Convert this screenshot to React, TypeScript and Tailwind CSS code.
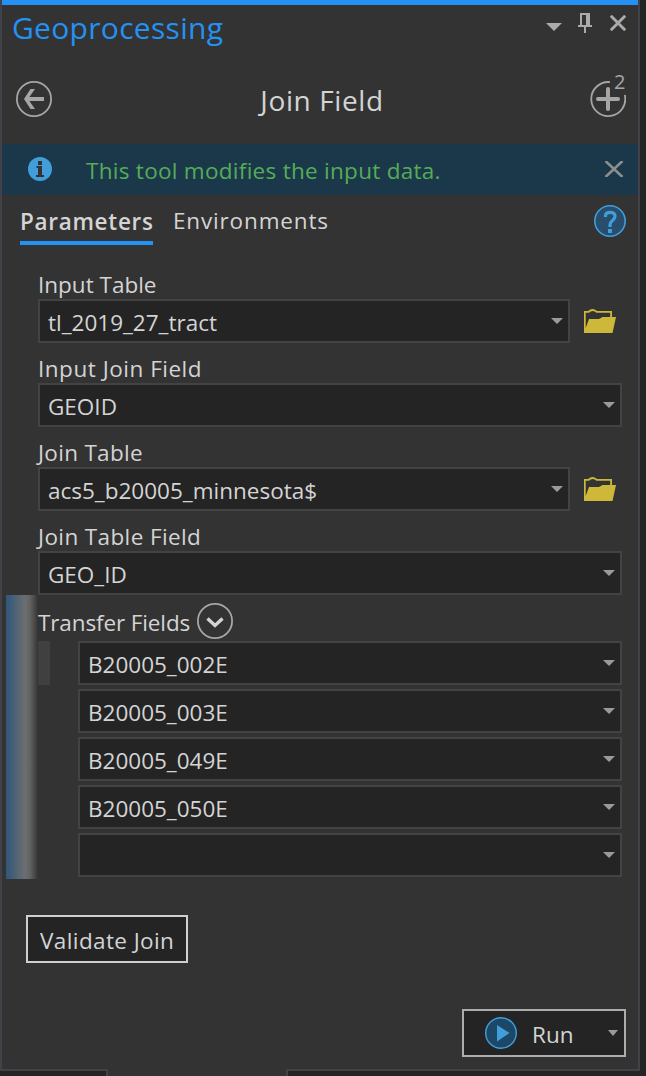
import React from 'react';

function Text({ children, className }: { children: React.ReactNode; className: string }) {
  return <span className={`block whitespace-nowrap ${className}`}>{children}</span>;
}

function Caret({ className = '' }: { className?: string }) {
  return (
    <svg width="12" height="6" viewBox="0 0 12 6" className={className}>
      <path d="M0 0H12L6 6Z" fill="#9b9b9b" />
    </svg>
  );
}

function Folder() {
  return (
    <svg width="32" height="25" viewBox="0 0 32 25" className="mb-px shrink-0">
      <path d="M0 25V3H4Q8.500 -1 13 3H28V9H26.200V4.800H12.500Q8.500 1.200 5 4.800H1.700V20L5 11H15L18.500 9H32L28.500 25Z" fill="#cdb83a" />
    </svg>
  );
}

function Select({ value, className, text = '' }: { value: string; className: string; text?: string }) {
  return (
    <div className={`flex h-11 items-center justify-between border-2 border-[#434343] bg-[#242424] pr-[5px] pl-2 ${className}`}>
      <Text className={`pt-1 text-[22.5px] ${text}`}>{value}</Text>
      <Caret />
    </div>
  );
}

interface Param {
  label: string;
  labelText: string;
  value: string;
  browse: boolean;
}

const params: Param[] = [
  { label: 'Input Table', labelText: 'tracking-[0px]', value: 'tl_2019_27_tract', browse: true },
  { label: 'Input Join Field', labelText: 'tracking-[0.52px]', value: 'GEOID', browse: false },
  { label: 'Join Table', labelText: 'tracking-[0.3px]', value: 'acs5_b20005_minnesota$', browse: true },
  { label: 'Join Table Field', labelText: 'tracking-[0.38px]', value: 'GEO_ID', browse: false },
];

const fields = ['B20005_002E', 'B20005_003E', 'B20005_049E', 'B20005_050E', ''];

export default function App() {
  return (
    <div className="flex h-[1076px] w-[646px] flex-col overflow-hidden bg-[#242424] font-['Open_Sans','Noto_Sans',sans-serif] text-[22.5px] leading-[30px] text-[#d4d4d4]">
      <main className="flex h-[1070px] w-[640px] flex-col border-x-2 border-[#414147] bg-[#333333]">
        <div className="h-[5px] shrink-0 bg-[#2492f2]" />
        <header className="flex h-[51px] shrink-0 justify-between pr-3 pl-2.5">
          <Text className="pt-[5px] text-[30px] leading-9 tracking-[0.3px] text-[#2492f2]">Geoprocessing</Text>
          <div className="flex items-start text-[#ababab]">
            <svg width="16" height="8" viewBox="0 0 16 8" className="mt-[18px]"><path d="M0 0H16L8 8Z" fill="currentColor" /></svg>
            <svg width="14" height="20" viewBox="0 0 14 20" className="mt-2 ml-4"><path d="M2 0H12V12H14V14H8V20H6V14H0V12H2ZM4 2V12H8V2Z" fill="currentColor" fillRule="evenodd" /></svg>
            <svg width="16" height="16" viewBox="0 0 16 16" className="mt-2.5 ml-[18px]"><path d="M.8 .8L15.200 15.200M15.200 .8L.8 15.200" stroke="currentColor" strokeWidth="2.900" /></svg>
          </div>
        </header>
        <div className="flex h-[88px] shrink-0 items-center justify-between pr-3 pl-3.5">
          <svg width="36" height="36" viewBox="0 0 36 36" fill="none" className="mt-[-2px]">
            <circle cx="18" cy="18" r="17.100" stroke="#a6a6a6" strokeWidth="1.800" />
            <path d="M28 18H11" stroke="#a6a6a6" strokeWidth="4" />
            <path d="M14.500 8H19L12 18L19 28H14.500L8 18Z" fill="#a6a6a6" />
          </svg>
          <Text className="ml-0.5 text-[28px] tracking-[0.6px]">Join Field</Text>
          <div className="relative mt-[-2px] h-9 w-9">
            <svg width="36" height="36" viewBox="0 0 36 36" fill="none">
              <path d="M20 1.100A17 17 0 1 0 34.800 14" stroke="#a6a6a6" strokeWidth="1.800" />
              <path d="M18 8V28M8 18H28" stroke="#a6a6a6" strokeWidth="4" strokeLinecap="round" />
            </svg>
            <span className="absolute top-[-11px] left-6 text-[20px] leading-6 text-[#a6a6a6]">2</span>
          </div>
        </div>
        <div className="flex h-[51px] shrink-0 items-center bg-[#1b384b] pr-3.5 pl-[26px]">
          <svg width="24" height="24" viewBox="0 0 24 24" className="mb-0.5"><circle cx="12" cy="12" r="12" fill="#429edb" /><path d="M10 4H14V8H10ZM8.500 9H14V18H16V20H8V18H10V11H8.500Z" fill="#333" /></svg>
          <Text className="ml-[34px] flex-1 pt-0.5 tracking-[0.28px] text-[#55ac57]">This tool modifies the input data.</Text>
          <svg width="20" height="16" viewBox="0 0 20 16" className="mb-0.5"><path d="M1.500 0L18.500 16M18.500 0L1.500 16" stroke="#8c8e90" strokeWidth="2.600" /></svg>
        </div>
        <div className="flex h-[75px] shrink-0 items-start pr-3 pl-[18px]">
          <div className="mt-[11px] h-[39px] w-[133px] border-b-4 border-[#2492f2]">
            <Text className="pt-px font-semibold tracking-[0.7px]">Parameters</Text>
          </div>
          <Text className="mt-[11px] ml-5 flex-1 tracking-[0.84px]">Environments</Text>
          <svg width="32" height="32" viewBox="0 0 32 32" fill="none" className="mt-[10px]">
            <circle cx="16" cy="16" r="15.200" fill="#284e6e" stroke="#429edb" strokeWidth="1.600" />
            <path d="M11.500 12V11Q11.500 7.300 16 7.300Q21 7.300 21 11.200Q21 13.300 18.500 15.500Q16 17.500 16 20V22" stroke="#429edb" strokeWidth="3.200" />
            <path d="M14 24H18V28H14Z" fill="#429edb" />
          </svg>
        </div>
        <form className="flex flex-col">
          {params.map((p) => (
            <div key={p.label} className="flex h-[84px] flex-col pl-9">
              <Text className={`h-[29px] ${p.labelText}`}>{p.label}</Text>
              <div className="flex items-center gap-3.5">
                <Select value={p.value} className={p.browse ? 'w-[532px]' : 'w-[584px]'} />
                {p.browse && <Folder />}
              </div>
            </div>
          ))}
          <section className="mt-[-11px] flex h-[284px] pl-1">
            <div className="h-[284px] w-8 shrink-0 bg-[linear-gradient(90deg,#315879_0%,#3f5c77_16%,#586673_38%,#6b6e71_60%,#626262_75%,#474747_90%,#333_100%)]" />
            <div className="flex flex-col">
              <div className="flex h-[46px] items-center">
                <Text className="w-[159px] pt-2.5 tracking-[-0.12px]">Transfer Fields</Text>
                <svg width="36" height="36" viewBox="0 0 36 36" fill="none" className="mt-1.5">
                  <circle cx="18" cy="18" r="17.100" stroke="#a6a6a6" strokeWidth="1.800" />
                  <path d="M10.500 15.500L18 22.500L25.500 15.500" stroke="#d4d4d4" strokeWidth="3.400" />
                </svg>
              </div>
              <div className="flex">
                <div className="h-11 w-3 bg-[#404040]" />
                <div className="ml-7 flex flex-col gap-1">
                  {fields.map((f, i) => (
                    <Select key={i} value={f} className="w-[544px]" />
                  ))}
                </div>
              </div>
            </div>
          </section>
        </form>
        <button className="mt-9 ml-6 flex h-12 w-[162px] shrink-0 items-center border-2 border-[#d0d0d0] bg-[#242424] pl-3">
          <Text className="pt-1 tracking-[0.4px]">Validate Join</Text>
        </button>
        <button className="mt-[46px] mr-3 flex h-12 w-[164px] shrink-0 items-center self-end border-2 border-[#adadad] bg-[#242424] pr-1.5 pl-[21px]">
          <svg width="32" height="32" viewBox="0 0 32 32"><circle cx="16" cy="16" r="15.300" fill="#1d4767" stroke="#429edb" strokeWidth="1.400" /><path d="M12 8L24.500 16L12 24.500Z" fill="#429edb" /></svg>
          <Text className="ml-[15px] flex-1 pt-1 text-left">Run</Text>
          <svg width="10" height="6" viewBox="0 0 10 6"><path d="M0 0H10L5 6Z" fill="#9b9b9b" /></svg>
        </button>
      </main>
      <footer className="mt-[-1px] flex h-[7px] w-[640px]">
        <div className="w-[108px] border-t-2 border-r-2 border-[#414147] bg-[#242424]" />
        <div className="w-[178px] bg-[#333333]" />
        <div className="flex-1 border-t-2 border-l-2 border-[#414147] bg-[#242424]" />
      </footer>
    </div>
  );
}
